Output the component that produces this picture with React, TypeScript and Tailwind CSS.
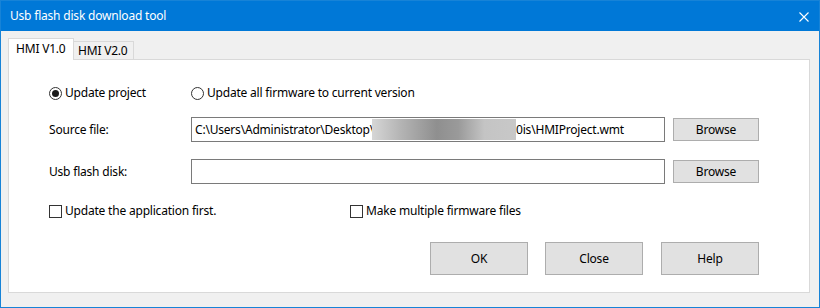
const font = { fontFamily: '"Noto Sans", "Open Sans", sans-serif' };

function Radio({ checked, label }: { checked?: boolean; label: string }) {
  return (
    <div className="flex items-center h-[16px]">
      <span className="w-[13px] h-[13px] rounded-full border border-[#333333] bg-white flex items-center justify-center">
        {checked && <span className="w-[7px] h-[7px] rounded-full bg-[#1a1a1a]" />}
      </span>
      <span className="ml-[3px]">{label}</span>
    </div>
  );
}

function Check({ label }: { label: string }) {
  return (
    <div className="flex items-center h-[16px]">
      <span className="w-[13px] h-[13px] border border-[#333333] bg-white" />
      <span className="ml-[3px]">{label}</span>
    </div>
  );
}

function Btn({ children, w, h }: { children: React.ReactNode; w: string; h: string }) {
  return (
    <button className={`${w} ${h} bg-[#e1e1e1] border border-[#adadad] flex items-center justify-center text-black`}>
      {children}
    </button>
  );
}

export default function App() {
  return (
    <div
      className="w-[820px] h-[308px] bg-[#f0f0f0] border border-[#1783d7] flex flex-col text-[12px] tracking-[-0.2px] text-black leading-none"
      style={font}
    >
      {/* title bar */}
      <div className="h-[30px] bg-[#0078d7] flex items-center justify-between pl-[9px] pr-[10px] text-white">
        <span className="text-[12px]">Usb flash disk download tool</span>
        <svg width="10" height="10" viewBox="0 0 10 10" className="mt-[1px]">
          <path d="M0.5 0.5 L9.5 9.5 M9.5 0.5 L0.5 9.5" stroke="white" strokeWidth="1.1" />
        </svg>
      </div>

      {/* tabs */}
      <div className="pl-[7px] mt-[7px] flex items-end relative z-10 -mb-px">
        <div className="h-[22px] w-[66px] bg-white border border-b-0 border-[#d9d9d9] flex items-center pl-[7px] pb-[2px]">
          HMI V1.0
        </div>
        <div className="h-[19px] w-[60px] bg-[#f0f0f0] border border-l-0 border-[#d9d9d9] flex items-center pl-[4px]">
          HMI V2.0
        </div>
      </div>

      {/* panel */}
      <div className="ml-[7px] w-[802px] h-[234px] bg-white border border-[#d9d9d9] flex flex-col pl-[40px]">
        <div className="mt-[25px] flex">
          <div className="w-[142px]">
            <Radio checked label="Update project" />
          </div>
          <Radio label="Update all firmware to current version" />
        </div>

        <div className="mt-[16px] flex items-center">
          <span className="w-[142px]">Source file:</span>
          <div className="w-[474px] h-[25px] border border-[#7a7a7a] bg-white flex items-center pl-[3px] whitespace-nowrap overflow-hidden">
            <span>C:\Users\Administrator\Desktop\</span>
            <span className="h-[21px] w-[144px] -ml-[2px] bg-[linear-gradient(90deg,#d6d6d6_0%,#b4b4b4_20%,#8f8f8f_45%,#9a9a9a_60%,#c4c4c4_78%,#c8c8c8_100%)]" />
            <span>0is\HMIProject.wmt</span>
          </div>
          <div className="ml-[8px]">
            <Btn w="w-[86px]" h="h-[23px]">Browse</Btn>
          </div>
        </div>

        <div className="mt-[17px] flex items-center">
          <span className="w-[142px]">Usb flash disk:</span>
          <div className="w-[474px] h-[25px] border border-[#7a7a7a] bg-white" />
          <div className="ml-[8px]">
            <Btn w="w-[86px]" h="h-[23px]">Browse</Btn>
          </div>
        </div>

        <div className="mt-[19px] flex">
          <div className="w-[301px]">
            <Check label="Update the application first." />
          </div>
          <Check label="Make multiple firmware files" />
        </div>

        <div className="mt-[23px] flex pl-[381px] gap-[17px]">
          <Btn w="w-[98px]" h="h-[33px]">OK</Btn>
          <Btn w="w-[98px]" h="h-[33px]">Close</Btn>
          <div className="ml-[1px]">
            <Btn w="w-[98px]" h="h-[33px]">Help</Btn>
          </div>
        </div>
      </div>
    </div>
  );
}
